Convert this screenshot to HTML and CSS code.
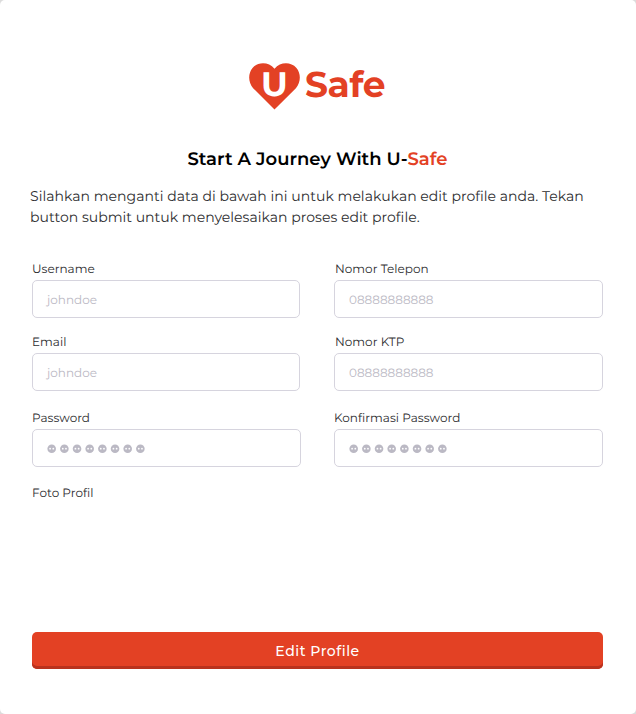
FILE: index.html
```html
<!DOCTYPE html>
<html lang="id">
<head>
<meta charset="utf-8">
<title>Edit Profile</title>
<link rel="stylesheet" href="styles.css">
</head>
<body>
<svg width="0" height="0" class="defs" aria-hidden="true">
  <defs>
    <g id="dot"><circle cx="4.7" cy="4.700" r="4.3" fill="#bbb9c4"/><circle cx="3.1" cy="4.700" r=".9" fill="#fff"/><circle cx="6.3" cy="4.700" r=".9" fill="#fff"/></g>
    <g id="mask">
      <use href="#dot"/><use href="#dot" x="12.67"/><use href="#dot" x="25.34"/><use href="#dot" x="38"/>
      <use href="#dot" x="50.67"/><use href="#dot" x="63.34"/><use href="#dot" x="76"/><use href="#dot" x="88.67"/>
    </g>
  </defs>
</svg>
<main class="card">
  <div class="logo">
    <span class="heart">
      <svg width="51" height="47" viewBox="0 0 52 47" preserveAspectRatio="none"><path d="M26 46.5 4.2 25.2C-1.2 19.4-.9 10 3.6 4.9 9.5-1.500 20-1.300 26 5.700 32-1.300 42.500-1.500 48.400 4.900 52.900 10 53.200 19.400 47.800 25.200Z" fill="#e34124"/></svg>
      <b class="heart-letter">U</b>
    </span>
    <span class="logo-text">Safe</span>
  </div>
  <h1 class="title">Start A Journey With U-<span class="accent">Safe</span></h1>
  <p class="intro">Silahkan menganti data di bawah ini untuk melakukan edit profile anda. Tekan<br>button submit untuk menyelesaikan proses edit profile.</p>
  <form class="form">
    <div class="field short"><label>Username</label><div class="input">johndoe</div></div>
    <div class="field inset"><label>Nomor Telepon</label><div class="input">08888888888</div></div>
    <div class="field short"><label>Email</label><div class="input">johndoe</div></div>
    <div class="field inset"><label>Nomor KTP</label><div class="input">08888888888</div></div>
    <div class="field last"><label>Password</label><div class="input masked"><svg width="100" height="10"><use href="#mask"/></svg></div></div>
    <div class="field last"><label>Konfirmasi Password</label><div class="input masked"><svg width="100" height="10"><use href="#mask"/></svg></div></div>
    <div class="field photo"><label>Foto Profil</label></div>
    <button class="submit" type="button">Edit Profile</button>
  </form>
</main>
</body>
</html>
```

FILE: styles.css
```css
* { box-sizing: border-box; }
body {
  margin: 0;
  background: #dcdcdc;
  font-family: Montserrat, Inter, "Open Sans", sans-serif;
  color: #2d2d2f;
  text-rendering: geometricPrecision;
}
.defs { display: block; }
.card {
  height: 714px;
  padding: 63px 33px 0 32px;
  background: #fff;
  border-radius: 5px;
  overflow: hidden;
}
.logo {
  display: flex;
  gap: 5px;
  height: 47px;
  padding-left: 217px;
  color: #e34124;
}
.heart { display: block; position: relative; width: 51px; }
.heart svg { display: block; }
.heart-letter {
  position: absolute;
  top: 0;
  left: 0;
  width: 51px;
  text-align: center;
  color: #fff;
  font-size: 34px;
  line-height: 43px;
}
.logo-text { font-size: 36px; font-weight: 700; line-height: 45px; letter-spacing: -.4px; }
.title {
  margin: 38px 0 0;
  font-size: 18px;
  font-weight: 600;
  line-height: 22px;
  letter-spacing: .02px;
  text-align: center;
  color: #000;
  white-space: nowrap;
}
.accent { color: #e34124; }
.intro {
  margin: 16px 0 0 -2px;
  font-size: 14px;
  line-height: 21px;
  letter-spacing: .027px;
  white-space: nowrap;
}
.form {
  display: grid;
  grid-template-columns: 269px 269px;
  column-gap: 33px;
  margin-top: 33px;
}
.field { height: 73px; }
.field label {
  display: block;
  height: 19px;
  padding-top: 1px;
  font-size: 12px;
  line-height: 16px;
  letter-spacing: .03px;
  white-space: nowrap;
}
.short .input { width: 268px; }
.inset label { padding-left: 1px; }
.last { height: 75px; padding-top: 3px; margin-bottom: 3px; }
.input {
  display: flex;
  align-items: center;
  height: 38px;
  padding: 3px 14px 0;
  border: 1px solid #d6d4de;
  border-radius: 5px;
  font-size: 12px;
  color: #bbb9c4;
}
.masked { padding-top: 1px; }
.photo { grid-column: 1 / -1; height: 147px; }
.submit {
  grid-column: 1 / -1;
  height: 37px;
  padding: 1px 0 0;
  border: 0;
  border-radius: 5px;
  background: #e34124;
  box-shadow: inset 0 -3px #b9321d;
  color: #fff;
  font: 500 14px/36px Montserrat, Inter, sans-serif;
  letter-spacing: .54px;
}
```
